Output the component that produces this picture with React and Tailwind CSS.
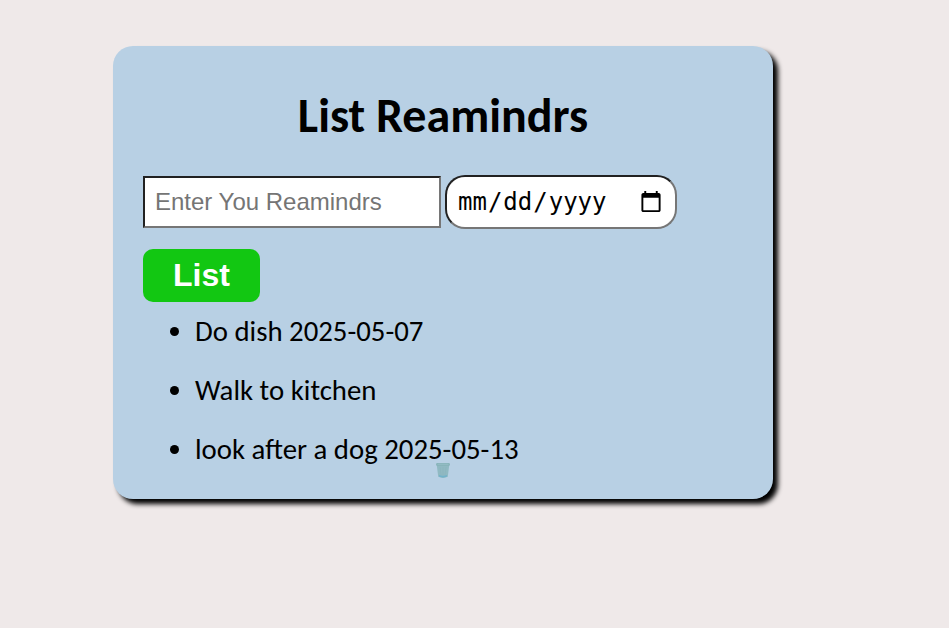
import React from "react";

const reminders = ["Do dish 2025-05-07", "Walk to kitchen", "look after a dog 2025-05-13"];

function TrashIcon() {
  return (
    <svg className="block h-[17px] w-[16px]" viewBox="0 0 16 17" aria-hidden="true">
      <path d="M1.7 2.5 L3.2 14.8 Q8 17 12.8 14.8 L14.3 2.5 Z" fill="#90b9c2" />
      <path d="M5 5 L6 13 M8 5 V13 M11 5 L10 13" stroke="#88b3bb" strokeWidth=".5" />
      <path d="M4 13 Q8 14.5 12 13 L11.8 14.8 Q8 16 4.2 14.8 Z" fill="#72b2ca" />
      <rect x="1" y="1" width="14" height="3" rx="1.4" fill="#88b4ba" />
      <rect x="2.5" y="1.8" width="11" height="1.2" rx=".6" fill="#92bbc3" />
    </svg>
  );
}

export default function App() {
  return (
    <div className="h-[628px] w-full overflow-hidden bg-[#efe9e9] pt-[46px] pl-[113px] font-['Carlito','Lato',sans-serif] text-black">
      <main className="h-[453px] w-[660px] rounded-[20px] bg-[#b8d0e4] px-[30px] pt-[42px] shadow-[5px_5px_5px_#000]">
        <h1 className="h-[56px] text-center text-[48px] leading-[56px] font-bold">List Reamindrs</h1>
        <div className="mt-[31px] flex h-[54px] items-center gap-1">
          <input
            type="text"
            placeholder="Enter You Reamindrs"
            className="h-[52px] w-[298px] border-2 border-t-[#212121] border-r-[#767676] border-b-[#767676] border-l-[#212121] bg-white px-[10px] font-['Liberation_Sans',Arial,sans-serif] text-[24px] placeholder:text-[#757575]"
          />
          <input
            type="date"
            className="h-[54px] w-[232px] rounded-[20px] border-2 border-t-[#212121] border-r-[#767676] border-b-[#767676] border-l-[#212121] bg-white px-[10px] font-['DejaVu_Sans_Mono',monospace] text-[24px]"
          />
        </div>
        <button className="mt-5 block h-[53px] w-[117px] rounded-[10px] bg-[#12c712] text-center font-['Liberation_Sans',Arial,sans-serif] text-[32px] leading-[53px] font-bold text-white">
          List
        </button>
        <ul className="flex list-disc flex-col gap-[25px] pt-[13px] pl-[52px] text-[28.8px] leading-[34px]">
          {reminders.map((item) => (
            <li key={item}>{item}</li>
          ))}
        </ul>
        <div className="-mt-[5px] flex justify-center">
          <TrashIcon />
        </div>
      </main>
    </div>
  );
}
